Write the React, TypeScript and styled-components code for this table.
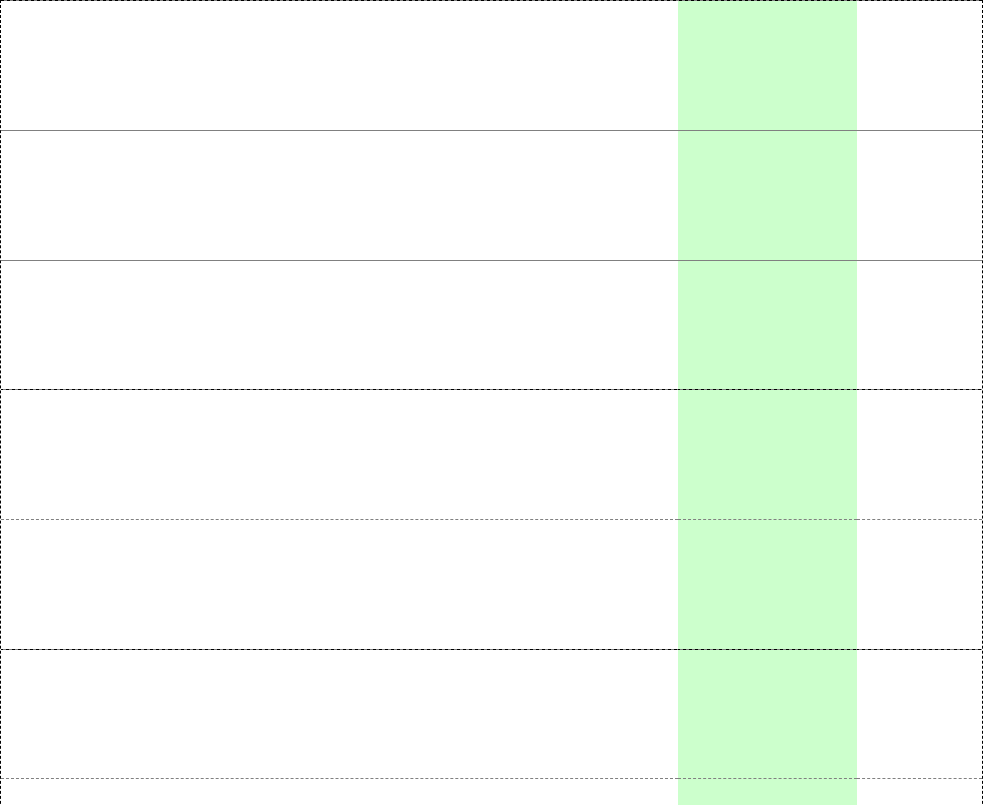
import React from "react";
import styled, { createGlobalStyle, css } from "styled-components";

const Global = createGlobalStyle`
  html, body { margin: 0; padding: 0; background: #ffffff; overflow: hidden; }
  body { font-family: "Liberation Sans", Arial, sans-serif; }
`;

type Line = "solid" | "mixed" | "dashed";

const mixedImage = css`
  border-image: repeating-linear-gradient(90deg, #000000 0 3px, #808080 3px 6px) 1;
`;

const Frame = styled.div`
  box-sizing: border-box;
  width: 983px;
  border-left: 1px dashed #000000;
  border-right: 1px dashed #000000;
`;

const TopEdge = styled.div`
  height: 1.2px;
  background: repeating-linear-gradient(90deg, #000000 0 3px, #808080 3px 6px);
`;

const Row = styled.div`
  display: grid;
  grid-template-columns: 677px 179px 1fr;
`;

const Cell = styled.div<{ $line: Line; $green?: boolean }>`
  box-sizing: border-box;
  height: 129.7px;
  background: ${(p) => (p.$green ? "#ccffcc" : "#ffffff")};
  border-bottom: 1px ${(p) => (p.$line === "solid" ? "solid" : "dashed")} #808080;
  ${(p) => (p.$line === "mixed" ? mixedImage : "")}
`;

const lines: Line[] = ["solid", "solid", "mixed", "dashed", "mixed", "dashed", "dashed"];

export default function App() {
  return (
    <>
      <Global />
      <Frame>
        <TopEdge />
        {lines.map((line, i) => (
          <Row key={i}>
            <Cell $line={line} />
            <Cell $line={line} $green />
            <Cell $line={line} />
          </Row>
        ))}
      </Frame>
    </>
  );
}
